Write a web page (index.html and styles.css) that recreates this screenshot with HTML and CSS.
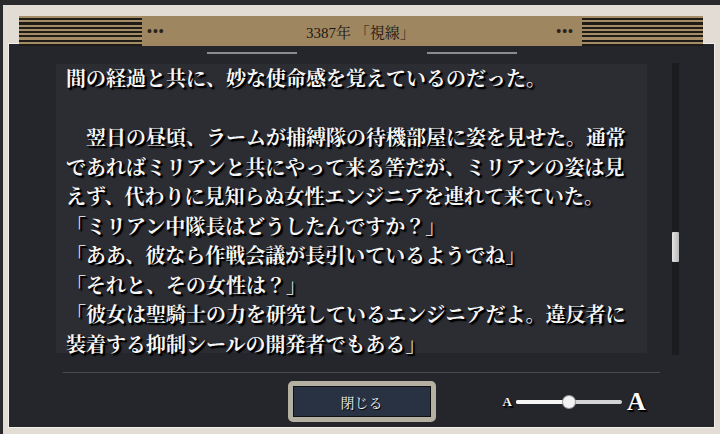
FILE: index.html
```html
<!DOCTYPE html>
<html lang="ja">
<head>
    <meta charset="UTF-8">
    <meta name="viewport" content="width=device-width, initial-scale=1.0">
    <title>3387年 「視線」</title>
    <link rel="stylesheet" href="styles.css">
</head>
<body>
    <div class="window">
        <div class="title-bar">
            <div class="stripes"></div>
            <span class="dots">•••</span>
            <h1 class="title">3387年 「視線」</h1>
            <span class="dots dots-right">•••</span>
            <div class="stripes stripes-right"></div>
        </div>

        <div class="panel">
            <div class="rules">
                <span class="rule"></span>
                <span class="rule"></span>
            </div>

            <div class="reader">
                <div class="story">
                    <p>間の経過と共に、妙な使命感を覚えているのだった。</p>
                    <p>&nbsp;</p>
                    <p>　翌日の昼頃、ラームが捕縛隊の待機部屋に姿を見せた。通常であればミリアンと共にやって来る筈だが、ミリアンの姿は見えず、代わりに見知らぬ女性エンジニアを連れて来ていた。</p>
                    <p>「ミリアン中隊長はどうしたんですか？」</p>
                    <p>「ああ、彼なら作戦会議が長引いているようでね」</p>
                    <p>「それと、その女性は？」</p>
                    <p>「彼女は聖騎士の力を研究しているエンジニアだよ。違反者に装着する抑制シールの開発者でもある」</p>
                </div>
                <div class="scrollbar">
                    <div class="thumb"></div>
                </div>
            </div>

            <div class="divider"></div>

            <div class="footer">
                <span></span>
                <button class="close-btn">閉じる</button>
                <div class="font-size">
                    <span class="a-small">A</span>
                    <div class="slider">
                        <div class="slider-fill" style="width: 50%;"></div>
                        <div class="knob" style="left: 50%;"></div>
                    </div>
                    <span class="a-large">A</span>
                </div>
            </div>
        </div>
    </div>
</body>
</html>
```

FILE: styles.css
```css
body {
    margin: 0;
    height: 434px;
    overflow: hidden;
    background: #2a2a2d;
    font-family: "Noto Serif CJK JP", "Noto Sans CJK JP", serif;
}
.window {
    box-sizing: border-box;
    height: 429px;
    margin: 5px 0 0 3px;
    padding: 11px 5px 6px 5px;
    background: #e2dcd5;
    display: flex;
    flex-direction: column;
}
.title-bar {
    position: relative;
    z-index: 1;
    height: 30px;
    margin: 0 12px 0 11px;
    background: #9e8660;
    border-radius: 2px;
    display: flex;
    align-items: center;
}
.stripes {
    width: 123px;
    height: 100%;
    background: repeating-linear-gradient(to bottom, #a48c66 0 2px, #1f1c18 2px 4.3px);
}
.stripes-right {
    width: 121px;
}
.dots {
    margin-left: 5px;
    font-family: "Liberation Sans", sans-serif;
    font-size: 14px;
    letter-spacing: 1px;
    color: #2a231b;
}
.dots-right {
    margin: 0 8px 0 0;
}
.title {
    flex: 1;
    margin: 0;
    text-align: center;
    font-family: "Liberation Serif", "Noto Serif CJK JP", serif;
    font-size: 15px;
    font-weight: normal;
    color: #1d1812;
}
.panel {
    flex: 1;
    margin-top: -3px;
    border: 1px solid #f3efe9;
    background: #25262b;
    display: flex;
    flex-direction: column;
}
.rules {
    margin-top: 8px;
    display: flex;
    justify-content: center;
    gap: 130px;
}
.rule {
    width: 90px;
    height: 2px;
    background: #8c8c8e;
}
.reader {
    margin: 9px 0 0 47px;
    display: flex;
    gap: 25px;
}
.story {
    box-sizing: border-box;
    width: 591px;
    height: 289px;
    margin-top: 1px;
    padding: 0 0 0 10px;
    background: #2c2d33;
    color: #f6f6f6;
    font-size: 20px;
    font-weight: bold;
    line-height: 29.5px;
    text-shadow: 1px 1px 0 #000, 2px 2px 0 #000, 2px 2px 2px #000;
}
.story p {
    width: 562px;
    margin: 0;
    position: relative;
    top: -1px;
}
.scrollbar {
    position: relative;
    width: 7px;
    height: 292px;
    background: #1b1c20;
}
.thumb {
    position: absolute;
    left: 0;
    top: 169px;
    width: 7px;
    height: 30px;
    border-radius: 1px;
    background: linear-gradient(to right, #e4e4e4, #b8b8b8);
}
.divider {
    height: 1px;
    margin: 17px 54px 0 54px;
    background: #4b4c51;
}
.footer {
    margin-top: 8px;
    display: grid;
    grid-template-columns: 1fr 148px 1fr;
    align-items: center;
}
.close-btn {
    box-sizing: border-box;
    width: 148px;
    height: 41px;
    border: 5px solid #b4b0a2;
    border-radius: 5px;
    background: #283243;
    box-shadow: inset 0 0 0 1px #0f1115;
    color: #f0f0f0;
    font-family: "Noto Serif CJK JP", "Noto Sans CJK JP", serif;
    font-size: 14px;
    text-shadow: 1px 1px 1px #000;
}
.font-size {
    margin-left: 67px;
    display: flex;
    align-items: center;
}
.a-small, .a-large {
    font-family: "Liberation Serif", serif;
    font-weight: bold;
    color: #fafafa;
    text-shadow: 1px 1px 0 #000, 2px 2px 1px #000;
}
.a-small {
    font-size: 13px;
}
.a-large {
    margin-left: 5px;
    font-size: 26px;
    line-height: 26px;
}
.slider {
    position: relative;
    width: 106px;
    height: 4px;
    margin-left: 4px;
    border-radius: 2px;
    background: #d4d4d6;
}
.slider-fill {
    height: 100%;
    border-radius: 2px;
    background: #f6f6f6;
}
.knob {
    position: absolute;
    top: -4px;
    width: 12px;
    height: 12px;
    margin-left: -6px;
    border-radius: 50%;
    background: #f2f2f2;
    box-shadow: 0 0 0 1px #9a9a9a;
}
```
